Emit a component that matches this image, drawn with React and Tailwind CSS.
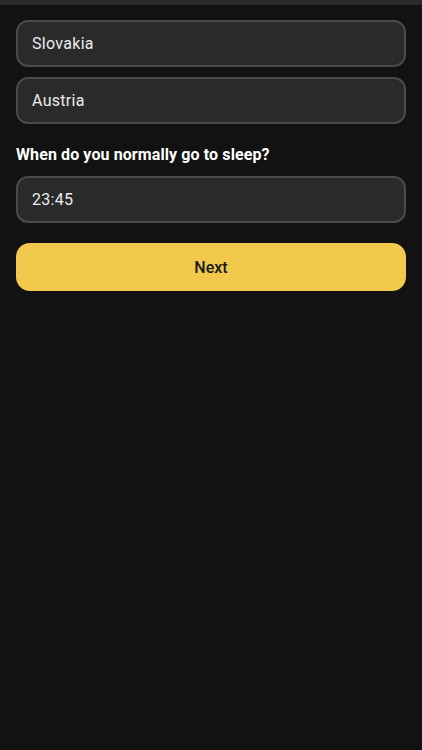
export default function App() {
  const fields = ['Slovakia', 'Austria'];

  return (
    <div className="min-h-[750px] bg-[#121212] font-['Roboto',sans-serif]">
      <div className="h-[5px] bg-[#2a2a2a]" />
      <div className="px-4 pt-[15px] flex flex-col">
        {fields.map((v, i) => (
          <input
            key={v}
            readOnly
            value={v}
            className={`h-[47px] w-full rounded-[12px] border-2 border-[#4a4a4a] bg-[#2a2a2a] px-[14px] text-[16px] tracking-[0.3px] text-[#ececec] outline-none ${i > 0 ? 'mt-[10px]' : ''}`}
          />
        ))}

        <label className="mt-[19px] mb-[9px] text-[16px] leading-6 font-bold tracking-[0.1px] text-white">
          When do you normally go to sleep?
        </label>
        <input
          readOnly
          value="23:45"
          className="h-[47px] w-full rounded-[12px] border-2 border-[#4a4a4a] bg-[#2a2a2a] px-[14px] text-[16px] tracking-[0.3px] text-[#ececec] outline-none"
        />

        <button className="mt-[20px] h-[48px] w-full rounded-[14px] bg-[#f2c94c] pt-[1px] text-[16px] font-medium text-[#1a1a1a]">
          Next
        </button>
      </div>
    </div>
  );
}
